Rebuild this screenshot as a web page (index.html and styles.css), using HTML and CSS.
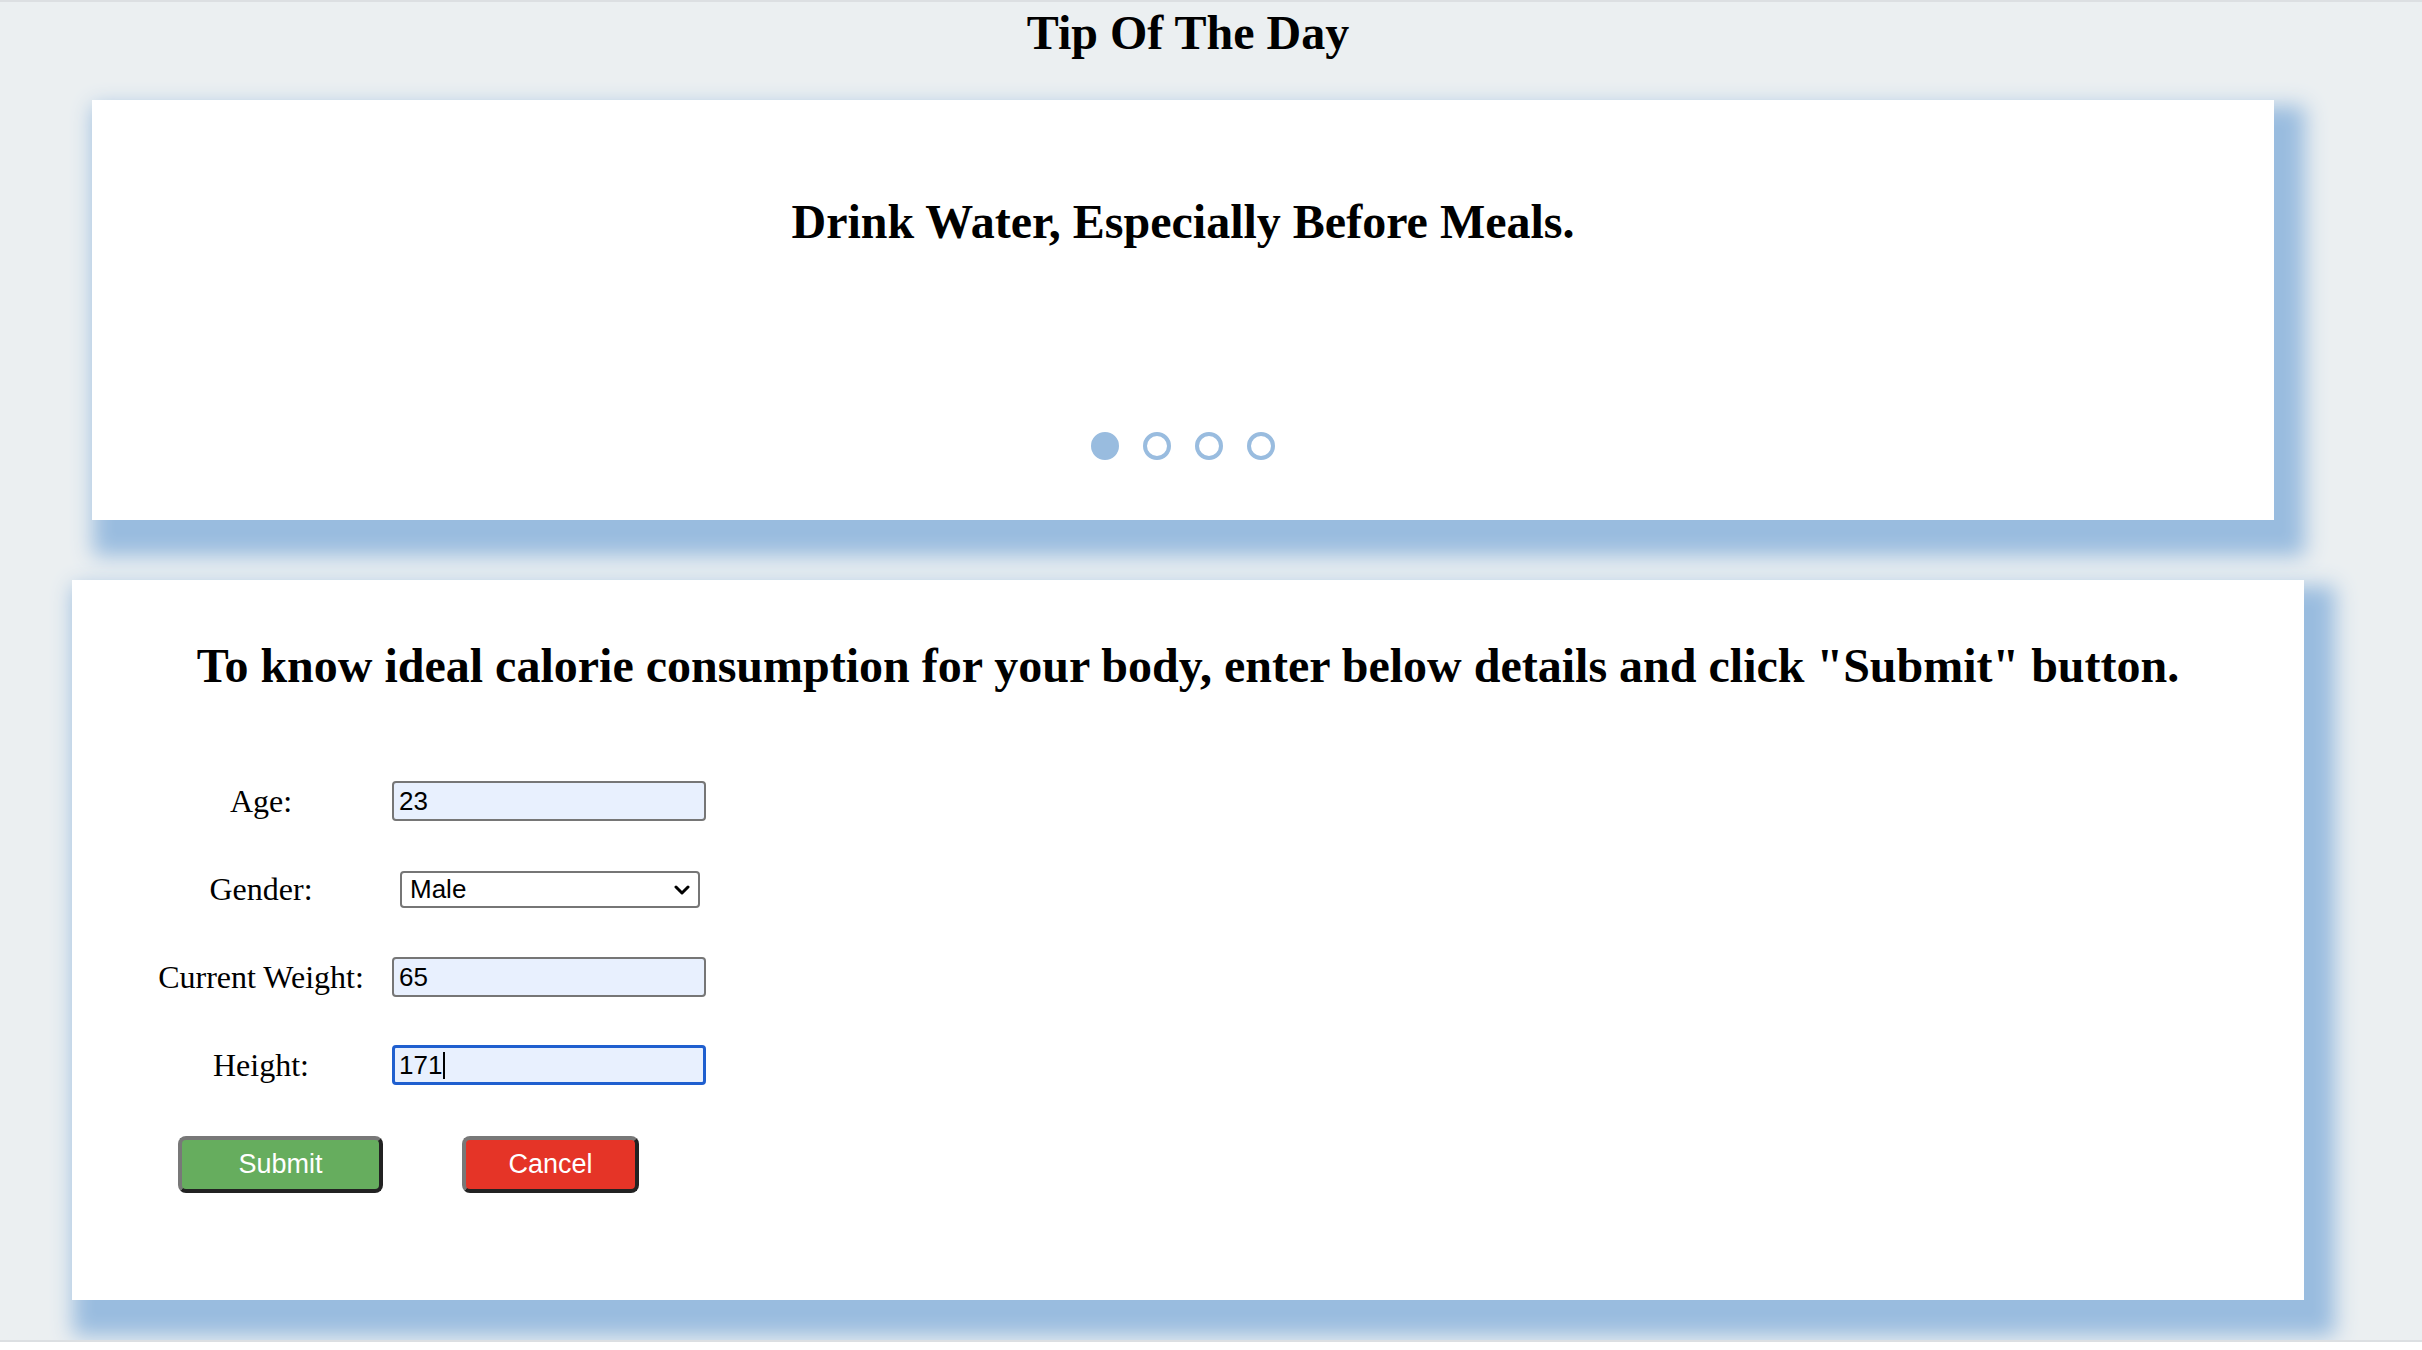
FILE: index.html
```html
<!DOCTYPE html>
<html lang="en">
<head>
<meta charset="utf-8">
<title>Tip Of The Day</title>
<link rel="stylesheet" href="styles.css">
</head>
<body>
<div class="page">
  <h1 class="title">Tip Of The Day</h1>

  <section class="card tip-card">
    <h2 class="tip-text">Drink Water, Especially Before Meals.</h2>
    <div class="dots">
      <span class="dot dot-active"></span>
      <span class="dot"></span>
      <span class="dot"></span>
      <span class="dot"></span>
    </div>
  </section>

  <section class="card form-card">
    <h2 class="form-title">To know ideal calorie consumption for your body, enter below details and click "Submit" button.</h2>
    <form class="form-grid">
      <label class="field-label" for="age">Age:</label>
      <div class="field"><input class="text-input" id="age" type="text" value="23"></div>

      <label class="field-label" for="gender">Gender:</label>
      <div class="field">
        <div class="select-wrap">
          <select class="select-input" id="gender">
            <option>Male</option>
            <option>Female</option>
          </select>
          <svg class="chevron" viewBox="0 0 16 10" width="16" height="10" aria-hidden="true"><path d="M2 2 L8 8 L14 2" fill="none" stroke="#000" stroke-width="3" stroke-linecap="round" stroke-linejoin="round"/></svg>
        </div>
      </div>

      <label class="field-label" for="weight">Current Weight:</label>
      <div class="field"><input class="text-input" id="weight" type="text" value="65"></div>

      <label class="field-label" for="height">Height:</label>
      <div class="field">
        <div class="focus-wrap">
          <input class="text-input text-input-focus" id="height" type="text" value="171">
          <span class="caret"></span>
        </div>
      </div>
    </form>
    <div class="buttons">
      <button class="btn btn-submit" type="button">Submit</button>
      <button class="btn btn-cancel" type="button">Cancel</button>
    </div>
  </section>
</div>
</body>
</html>
```

FILE: styles.css
```css
html {
  background: #ffffff;
}

body {
  margin: 0;
  font-family: "Liberation Serif", "Times New Roman", serif;
  color: #000;
}

.page {
  box-sizing: border-box;
  height: 1342px;
  width: 2422px;
  background: #ebeff1;
  border-top: 2px solid #dcdfe2;
  border-bottom: 2px solid #dcdfe2;
  overflow: hidden;
}

.title {
  width: 2376px;
  margin: 3px 0 0;
  text-align: center;
  font-size: 48px;
  line-height: 55px;
  font-weight: bold;
}

.card {
  box-sizing: border-box;
  background: #ffffff;
  box-shadow: 16px 21px 20px 15px #99bcdf;
}

.tip-card {
  margin: 40px 0 0 92px;
  width: 2182px;
  height: 420px;
  padding-top: 95px;
  display: flex;
  flex-direction: column;
  align-items: center;
}

.tip-text {
  margin: 0;
  font-size: 48px;
  line-height: 54px;
  font-weight: bold;
}

.dots {
  margin-top: 183px;
  display: flex;
  gap: 24px;
}

.dot {
  box-sizing: border-box;
  width: 28px;
  height: 28px;
  border-radius: 50%;
  border: 4px solid #99bcdf;
  background: #ffffff;
}

.dot-active {
  background: #99bcdf;
}

.form-card {
  margin: 60px 0 0 72px;
  width: 2232px;
  height: 720px;
  padding-top: 58px;
}

.form-title {
  margin: 0;
  text-align: center;
  font-size: 48px;
  line-height: 55px;
  font-weight: bold;
}

.form-grid {
  margin: 64px 0 0 69px;
  display: grid;
  grid-template-columns: 240px 400px;
  grid-auto-rows: 88px;
  column-gap: 11px;
  align-items: center;
}

.field-label {
  text-align: center;
  font-size: 32px;
}

.field {
  display: flex;
  align-items: center;
}

.text-input {
  box-sizing: border-box;
  width: 314px;
  height: 40px;
  margin: 0;
  padding: 0 5px;
  border: 2px solid #767676;
  border-radius: 4px;
  background: #e8f0fe;
  font-family: "Liberation Sans", Arial, sans-serif;
  font-size: 26px;
  color: #000;
  outline: none;
}

.text-input-focus {
  border: 3px solid #1f5fcf;
  padding: 0 4px;
}

.focus-wrap {
  position: relative;
}

.caret {
  position: absolute;
  left: 51px;
  top: 7px;
  width: 2px;
  height: 27px;
  background: #000;
}

.select-wrap {
  position: relative;
  margin-left: 8px;
}

.select-input {
  box-sizing: border-box;
  width: 300px;
  height: 37px;
  margin: 0;
  padding: 0 8px;
  border: 2px solid #767676;
  border-radius: 4px;
  background: #ffffff;
  font-family: "Liberation Sans", Arial, sans-serif;
  font-size: 26px;
  color: #000;
  -webkit-appearance: none;
  appearance: none;
}

.chevron {
  position: absolute;
  right: 10px;
  top: 14px;
  pointer-events: none;
}

.buttons {
  margin: 27px 0 0 106px;
  display: flex;
  gap: 79px;
}

.btn {
  box-sizing: border-box;
  height: 57px;
  border: 4px solid;
  border-color: #787878 #222222 #222222 #787878;
  border-radius: 8px;
  color: #ffffff;
  font-family: "Liberation Sans", Arial, sans-serif;
  font-size: 27px;
  padding: 0;
}

.btn-submit {
  width: 205px;
  background: #66ad5e;
}

.btn-cancel {
  width: 177px;
  background: #e53427;
}
```
